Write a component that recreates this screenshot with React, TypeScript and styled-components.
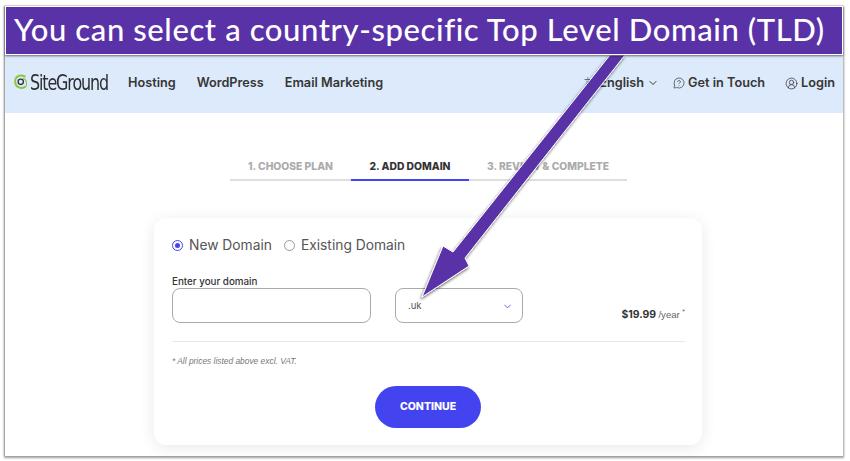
import React from 'react';
import styled, { createGlobalStyle } from 'styled-components';
import { ChevronDown, CircleUserRound, Languages, MessageCircleQuestion } from 'lucide-react';

const Global = createGlobalStyle`
  html, body { margin: 0; padding: 0; background: #fff; }
  body { width: 850px; height: 461px; overflow: hidden; font-family: Inter, "Open Sans", sans-serif; }
`;

const Page = styled.div`
  position: relative;
  width: 850px;
  height: 461px;
  padding: 6px 7px 5px 5px;
  box-sizing: border-box;
`;

const Shot = styled.div`
  height: 450px;
  background: #fff;
  box-shadow: 0 1px 2px 1px rgba(0, 0, 0, 0.38), -1px 0 1px rgba(0, 0, 0, 0.12);
`;

const Banner = styled.h1`
  box-sizing: border-box;
  height: 49px;
  margin: 0;
  padding: 0 0 2px 8px;
  display: flex;
  align-items: center;
  background: #5a32a8;
  border: 1px solid #fff;
  box-shadow: 0 1px 2px rgba(0, 0, 0, 0.55);
  color: #fff;
  font: 500 31px/1 Lato, sans-serif;
  letter-spacing: 0.61px;
  white-space: nowrap;
  position: relative;
  z-index: 1;
`;

const Nav = styled.nav`
  box-sizing: border-box;
  height: 58px;
  padding: 0 8px 1px 9px;
  display: flex;
  align-items: center;
  background: #dceafb;
`;

const Logo = styled.div`
  display: flex;
  align-items: center;
  gap: 2px;
  width: 114px;
  color: #2e2e2e;
  svg { flex: none; margin-bottom: 3px; }
`;

const LogoText = styled.span`
  font: 400 21px/1 "DejaVu Sans", sans-serif;
  letter-spacing: -1.5px;
  transform: scaleX(0.76);
  transform-origin: left center;
  white-space: nowrap;
`;

const NavLink = styled.a`
  display: flex;
  align-items: center;
  gap: 3px;
  margin-right: ${p => p.$gap ?? 21}px;
  color: #363636;
  font: 600 12.7px/1 Inter, sans-serif;
  white-space: nowrap;
`;

const Spacer = styled.div`
  flex: 1;
`;

const Stepper = styled.div`
  display: flex;
  justify-content: center;
  margin-top: 45px;
  padding-left: 9px;
`;

const Step = styled.div`
  box-sizing: border-box;
  width: ${p => p.$width}px;
  height: 23px;
  text-align: center;
  border-bottom: 2px solid ${p => (p.$active ? '#4343f0' : '#dedede')};
  color: ${p => (p.$active ? '#333' : '#ababab')};
  font: 800 10.3px/16px Inter, sans-serif;
`;

const Card = styled.section`
  box-sizing: border-box;
  width: 548px;
  height: 227px;
  margin: 37px 0 0 149px;
  padding: 19px 17px 0 18px;
  background: #fff;
  border-radius: 12px;
  box-shadow: 0 3px 16px rgba(0, 0, 0, 0.09);
`;

const RadioRow = styled.div`
  display: flex;
  align-items: center;
  height: 17px;
  color: #555;
  font: 400 13.8px/1 Inter, sans-serif;
`;

const Radio = styled.span`
  box-sizing: border-box;
  width: 11px;
  height: 11px;
  margin-right: 6px;
  border-radius: 50%;
  border: 1px solid ${p => (p.$on ? '#4343f0' : '#999')};
  display: flex;
  align-items: center;
  justify-content: center;
  &::after {
    content: '';
    width: 5px;
    height: 5px;
    border-radius: 50%;
    background: ${p => (p.$on ? '#4343f0' : 'transparent')};
  }
`;

const RadioLabel = styled.span`
  margin-right: 12px;
`;

const FieldLabel = styled.div`
  margin-top: 21px;
  height: 13px;
  color: #333;
  font: 500 9.8px/13px Inter, sans-serif;
`;

const FieldRow = styled.div`
  display: flex;
  align-items: flex-end;
`;

const Field = styled.div`
  box-sizing: border-box;
  width: ${p => p.$width}px;
  height: 35px;
  margin-right: 24px;
  padding: 1px 9px 0 12px;
  display: flex;
  align-items: center;
  justify-content: space-between;
  border: 1px solid #aaa;
  border-radius: 8px;
  color: #555;
  font: 400 9.5px/1 Inter, sans-serif;
`;

const Price = styled.div`
  margin-left: auto;
  margin-bottom: 2px;
  color: #333;
  font: 700 10.4px/1 Inter, sans-serif;
  white-space: nowrap;
  small { color: #666; font: 400 9.6px/1 "Liberation Sans", sans-serif; }
  sup { color: #666; font: 400 7px/1 "Liberation Sans", sans-serif; }
`;

const Divider = styled.hr`
  margin: 18px 0 0;
  border: 0;
  border-top: 1px solid #e8e8e8;
`;

const Note = styled.p`
  margin: 14px 0 0;
  color: #777;
  font: italic 400 8.4px/10px "Liberation Sans", sans-serif;
`;

const Continue = styled.button`
  display: block;
  width: 106px;
  height: 42px;
  margin: 20px 0 0 203px;
  border: 0;
  border-radius: 21px;
  background: #4343f0;
  color: #fff;
  font: 800 10.5px/1 Inter, sans-serif;
`;

const ArrowOverlay = styled.svg`
  position: absolute;
  left: 0;
  top: 0;
  pointer-events: none;
`;

const App = () => (
  <Page>
    <Global />
    <Shot>
      <Banner>You can select a country-specific Top Level Domain (TLD)</Banner>
      <Nav>
        <Logo>
          <svg width="14" height="18" viewBox="0 0 17 20" fill="none">
            <path d="M13 3.2C9 .8 2.6 2 1.6 7.4 1 11 2.6 15 6 16.6c2.6 1.2 5 .8 7-.4" stroke="#8cc63f" strokeWidth="2.4" strokeLinecap="round" />
            <path d="M14 16C16 13 15.8 6.6 11 5.4" stroke="#8cc63f" strokeWidth="1.4" strokeLinecap="round" />
            <circle cx="8.2" cy="9.8" r="3.2" stroke="#333" strokeWidth="1.6" />
          </svg>
          <LogoText>SiteGround</LogoText>
        </Logo>
        <NavLink>Hosting</NavLink>
        <NavLink>WordPress</NavLink>
        <NavLink>Email Marketing</NavLink>
        <Spacer />
        <NavLink $gap={14}>
          <Languages size={12} strokeWidth={1.4} />
          English
          <ChevronDown size={12} strokeWidth={2} />
        </NavLink>
        <NavLink $gap={20}>
          <MessageCircleQuestion size={12} strokeWidth={1.4} />
          Get in Touch
        </NavLink>
        <NavLink $gap={0}>
          <CircleUserRound size={13} strokeWidth={1.4} />
          Login
        </NavLink>
      </Nav>
      <Stepper>
        <Step $width={121}>1. CHOOSE PLAN</Step>
        <Step $width={118} $active>2. ADD DOMAIN</Step>
        <Step $width={158}>3. REVIEW &amp; COMPLETE</Step>
      </Stepper>
      <Card>
        <RadioRow>
          <Radio $on />
          <RadioLabel>New Domain</RadioLabel>
          <Radio />
          <RadioLabel>Existing Domain</RadioLabel>
        </RadioRow>
        <FieldLabel>Enter your domain</FieldLabel>
        <FieldRow>
          <Field $width={199} />
          <Field $width={128}>
            .uk
            <ChevronDown size={11} color="#4343f0" strokeWidth={1.8} />
          </Field>
          <Price>
            $19.99 <small>/year</small> <sup>*</sup>
          </Price>
        </FieldRow>
        <Divider />
        <Note>* All prices listed above excl. VAT.</Note>
        <Continue>CONTINUE</Continue>
      </Card>
    </Shot>
    <ArrowOverlay width="850" height="461" viewBox="0 0 850 461">
      <defs>
        <filter id="arrowShadow" x="-20%" y="-20%" width="140%" height="140%">
          <feDropShadow dx="-1" dy="2" stdDeviation="1.5" floodColor="#000" floodOpacity="0.6" />
        </filter>
      </defs>
      <path
        d="M610 55 L625 55 L465 258 L469 266 L422 297 L443 246 L453 252 Z"
        fill="#5a32a8"
        stroke="#fff"
        strokeWidth="1"
        strokeLinejoin="round"
        filter="url(#arrowShadow)"
      />
    </ArrowOverlay>
  </Page>
);

export default App;
